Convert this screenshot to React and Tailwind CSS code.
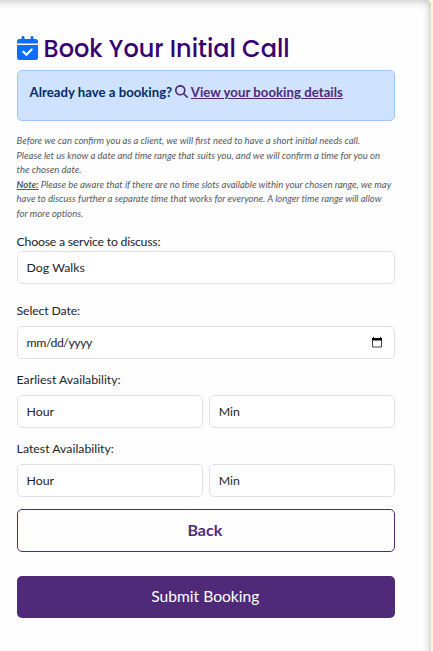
import React from "react";
import { FaCalendarCheck, FaMagnifyingGlass } from "react-icons/fa6";

const field =
  "flex h-[33px] min-w-0 flex-1 items-center rounded-[5px] border border-[#dee2e6] bg-white px-[9px] pt-[2px] text-[12.3px] text-[#212529]";

function Label({ children, className = "" }) {
  return <div className={`h-[20px] text-[12.3px] leading-[20px] text-[#212529] ${className}`}>{children}</div>;
}

function DateIcon() {
  return (
    <svg className="mb-[2px] mr-[3px] h-[12px] w-[10px]" viewBox="0 0 10 12" fill="none">
      <path d="M0.5 2.5h9v8.5h-9z" stroke="#444" />
      <path d="M0 2h10v2.5H0zM1 1h1v1h-1zM8 1h1v1h-1z" fill="#000" />
    </svg>
  );
}

function TimeRow() {
  return (
    <div className="mt-[5px] flex gap-[6px]">
      <div className={field}>Hour</div>
      <div className={field}>Min</div>
    </div>
  );
}

export default function App() {
  return (
    <div className="h-[651px] w-[433px] overflow-hidden bg-[#fdf7d3] font-['Lato',sans-serif]">
      <main className="-ml-[20px] flex h-[671px] w-[451px] flex-col rounded-tr-[5px] bg-[#fefefe] pl-[36.6px] pr-[36px] pt-[32px] shadow-[inset_0_0_10px_rgba(0,0,0,0.3)]">
        <h1 className="flex h-[32px] items-center whitespace-nowrap text-[24px] font-medium text-[#36006f]">
          <FaCalendarCheck className="h-[24px] w-[21px] shrink-0 text-[#0d6efd]" />
          <span className="ml-[6px] pt-[2px] font-['Poppins','Inter',sans-serif]">Book Your Initial Call</span>
        </h1>

        <div className="mt-[6px] flex h-[51px] items-start rounded-[5px] border border-[#9ec5fe] bg-[#cfe2ff] px-[12px] pt-[11px] text-[13.2px] font-bold leading-[20px] text-[#052c65]">
          <span>Already have a booking?</span>
          <a className="ml-[2.6px] flex text-[#4f2a78]">
            <FaMagnifyingGlass className="mr-[3px] mt-[3px] h-[13px] w-[13px]" />
            <span className="tracking-[0.03px] underline">View your booking details</span>
          </a>
        </div>

        <p className="mt-[13px] whitespace-nowrap text-[9.49px] italic leading-[14.6px] text-[#55595c]">
          Before we can confirm you as a client, we will first need to have a short initial needs call.
          <br />
          Please let us know a date and time range that suits you, and we will confirm a time for you on
          <br />
          the chosen date.
          <br />
          <b className="underline">Note:</b> Please be aware that if there are no time slots available within your chosen range, we may
          <br />
          have to discuss further a separate time that works for everyone. A longer time range will allow
          <br />
          for more options.
        </p>

        <div className="mt-[9.4px]">
          <Label className="pt-px tracking-[-0.24px]">Choose a service to discuss:</Label>
          <div className="flex">
            <div className={field}>Dog Walks</div>
          </div>
        </div>

        <div className="mt-[17px]">
          <Label className="tracking-[-0.15px]">Select Date:</Label>
          <div className="mt-[5px] flex">
            <div className={field}>
              <span className="flex-1 tracking-[-0.45px]">mm/dd/yyyy</span>
              <DateIcon />
            </div>
          </div>
        </div>

        <div className="mt-[11px]">
          <Label>Earliest Availability:</Label>
          <TimeRow />
        </div>

        <div className="mt-[11px]">
          <Label>Latest Availability:</Label>
          <TimeRow />
        </div>

        <button className="mt-[12px] h-[43px] shrink-0 rounded-[5px] border border-[#4f2a78] pr-[2px] text-[16px] font-bold text-[#4f2a78]">
          Back
        </button>
        <button className="mt-[24px] h-[42px] shrink-0 rounded-[5px] bg-[#4f2a78] pr-px text-[15.6px] text-white">
          Submit Booking
        </button>
      </main>
    </div>
  );
}
